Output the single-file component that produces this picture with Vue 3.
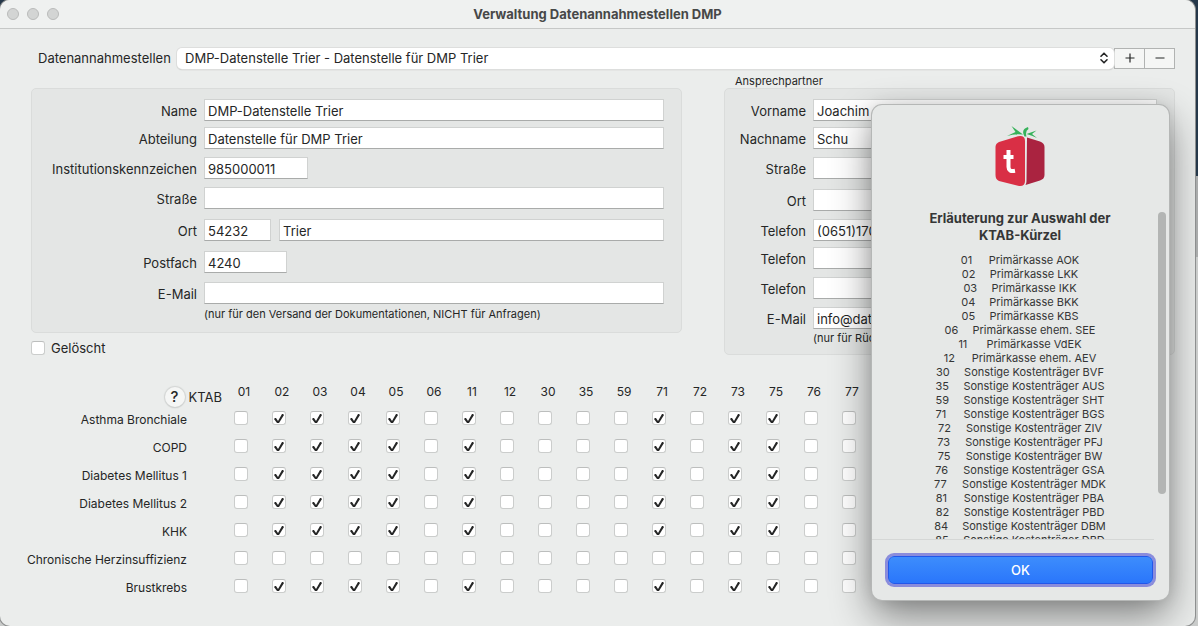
<script setup>
import { ref } from 'vue'

const codes = ['01', '02', '03', '04', '05', '06', '11', '12', '30', '35', '59', '71', '72', '73', '75', '76', '77']
const usual = ['02', '03', '04', '05', '11', '71', '73', '75']

const programs = ref([
  { name: 'Asthma Bronchiale', active: [...usual] },
  { name: 'COPD', active: [...usual] },
  { name: 'Diabetes Mellitus 1', active: [...usual] },
  { name: 'Diabetes Mellitus 2', active: [...usual] },
  { name: 'KHK', active: [...usual] },
  { name: 'Chronische Herzinsuffizienz', active: [] },
  { name: 'Brustkrebs', active: [...usual] }
])

const office = ref({
  name: 'DMP-Datenstelle Trier',
  department: 'Datenstelle für DMP Trier',
  number: '985000011',
  street: '',
  zip: '54232',
  city: 'Trier',
  box: '4240',
  mail: ''
})

const contact = ref([
  { id: 'c-first', label: 'Vorname', value: 'Joachim' },
  { id: 'c-last', label: 'Nachname', value: 'Schu' },
  { id: 'c-street', label: 'Straße', value: '' },
  { id: 'c-city', label: 'Ort', value: '' },
  { id: 'c-tel1', label: 'Telefon', value: '(0651)170' },
  { id: 'c-tel2', label: 'Telefon', value: '' },
  { id: 'c-tel3', label: 'Telefon', value: '' },
  { id: 'c-mail', label: 'E-Mail', value: 'info@datenstelle' }
])

const legend = [
  ['01', 'Primärkasse AOK'],
  ['02', 'Primärkasse LKK'],
  ['03', 'Primärkasse IKK'],
  ['04', 'Primärkasse BKK'],
  ['05', 'Primärkasse KBS'],
  ['06', 'Primärkasse ehem. SEE'],
  ['11', 'Primärkasse VdEK'],
  ['12', 'Primärkasse ehem. AEV'],
  ['30', 'Sonstige Kostenträger BVF'],
  ['35', 'Sonstige Kostenträger AUS'],
  ['59', 'Sonstige Kostenträger SHT'],
  ['71', 'Sonstige Kostenträger BGS'],
  ['72', 'Sonstige Kostenträger ZIV'],
  ['73', 'Sonstige Kostenträger PFJ'],
  ['75', 'Sonstige Kostenträger BW'],
  ['76', 'Sonstige Kostenträger GSA'],
  ['77', 'Sonstige Kostenträger MDK'],
  ['81', 'Sonstige Kostenträger PBA'],
  ['82', 'Sonstige Kostenträger PBD'],
  ['84', 'Sonstige Kostenträger DBM'],
  ['85', 'Sonstige Kostenträger DBD']
]

const deleted = ref(false)
</script>

<template>
  <div class="desktop">
    <main class="window">
      <header class="titlebar">
        <div class="lights">
          <button type="button" aria-label="Schließen"></button>
          <button type="button" aria-label="Minimieren"></button>
          <button type="button" aria-label="Zoomen"></button>
        </div>
        <h1>Verwaltung Datenannahmestellen DMP</h1>
      </header>

      <div class="content">
        <div class="toolbar">
          <label for="office">Datenannahmestellen</label>
          <div class="picker">
            <select id="office">
              <option>DMP-Datenstelle Trier - Datenstelle für DMP Trier</option>
            </select>
            <svg class="arrows" viewBox="0 0 8 12" aria-hidden="true">
              <path d="M1 4.2 4 1.2 7 4.2M1 7.8 4 10.8 7 7.8" />
            </svg>
          </div>
          <div class="segments">
            <button type="button" aria-label="Hinzufügen">
              <svg viewBox="0 0 10 10"><path d="M5 .5v9M.5 5h9" /></svg>
            </button>
            <button type="button" aria-label="Entfernen">
              <svg viewBox="0 0 10 10"><path d="M.5 5h9" /></svg>
            </button>
          </div>
        </div>

        <div class="columns">
          <div class="left">
            <section class="group office">
              <label for="o-name">Name</label>
              <input id="o-name" v-model="office.name" type="text" />
              <label for="o-dep">Abteilung</label>
              <input id="o-dep" v-model="office.department" type="text" />
              <label for="o-num">Institutionskennzeichen</label>
              <input id="o-num" v-model="office.number" class="number" type="text" />
              <label for="o-street">Straße</label>
              <input id="o-street" v-model="office.street" type="text" />
              <label for="o-zip">Ort</label>
              <div class="pair">
                <input id="o-zip" v-model="office.zip" class="zip" type="text" />
                <input v-model="office.city" class="city" type="text" aria-label="Ortsname" />
              </div>
              <label for="o-box">Postfach</label>
              <input id="o-box" v-model="office.box" class="box" type="text" />
              <label for="o-mail">E-Mail</label>
              <input id="o-mail" v-model="office.mail" type="text" />
              <p class="hint">(nur für den Versand der Dokumentationen, NICHT für Anfragen)</p>
            </section>
            <label class="deleted"><input v-model="deleted" class="tick" type="checkbox" />Gelöscht</label>
          </div>

          <div class="right">
            <h2>Ansprechpartner</h2>
            <section class="group contact">
              <template v-for="f in contact" :key="f.id">
                <label :for="f.id">{{ f.label }}</label>
                <input :id="f.id" v-model="f.value" type="text" />
              </template>
              <p class="hint">(nur für Rückfragen)</p>
            </section>
          </div>
        </div>

        <table>
          <thead>
            <tr>
              <th class="corner" scope="col">
                <div class="ktab"><button type="button" class="help" aria-label="Hilfe">?</button>KTAB</div>
              </th>
              <th v-for="c in codes" :key="c" scope="col">{{ c }}</th>
            </tr>
          </thead>
          <tbody>
            <tr v-for="p in programs" :key="p.name">
              <th scope="row">{{ p.name }}</th>
              <td v-for="c in codes" :key="c">
                <input v-model="p.active" class="tick" type="checkbox" :value="c" :aria-label="p.name + ' ' + c" />
              </td>
            </tr>
          </tbody>
        </table>
      </div>

      <div class="dialog" role="dialog" aria-labelledby="dialog-title">
        <svg class="logo" viewBox="0 0 50 60" aria-hidden="true">
          <path fill="#d92f45" d="M4 16 23 10.2Q30 9 30 15V55Q30 61 23 59.8L4 55Q.5 53.500 .5 49V21Q.5 17.500 4 16Z" />
          <path fill="#aa2340" d="M32 11.500 45 15.500Q49.500 17 49.500 21V49Q49.500 53 45 54.500L30.500 59Q31.500 57.500 31.500 55Z" />
          <path fill="#36b25a" d="M16.500 0 28 8.500Q20 7.500 12 10L20.500 6ZM29.500 10.500Q25.500 3.500 33 1L33.500 3Q30 5 31.500 10.500ZM31.500 8 41.500 4.500 37 8 42 12Q37 9.500 31.500 8Z" />
          <path fill="none" stroke="#fff" stroke-width="4" d="M13.500 24V41Q13.500 46 20 44.800M8.500 31H18.500" />
        </svg>
        <div class="scroller">
          <h2 id="dialog-title">Erläuterung zur Auswahl der KTAB-Kürzel</h2>
          <ul>
            <li v-for="[code, text] in legend" :key="code"><span>{{ code }}</span>{{ text }}</li>
          </ul>
        </div>
        <div class="thumb"></div>
        <button type="button" class="ok">OK</button>
      </div>
    </main>
  </div>
</template>

<style>
body {
  margin: 0;
}
</style>

<style scoped>
* {
  box-sizing: border-box;
}
.desktop {
  height: 100vh;
  padding-right: 3px;
  overflow: hidden;
  background: linear-gradient(#25384a 0 176px, #a9abab 176px 257px, #c9cbca 257px);
  font-family: Inter, "Liberation Sans", sans-serif;
  font-size: 13px;
  line-height: 16px;
  color: #252626;
}
.window {
  position: relative;
  height: 100%;
  overflow: hidden;
  border-radius: 10px;
  background: #ebedec;
  box-shadow: 0 0 0 1px #8d8f8f;
}
button,
input,
select {
  font: inherit;
  color: inherit;
  margin: 0;
}
h1,
h2,
p,
ul {
  margin: 0;
  padding: 0;
}
.titlebar {
  display: grid;
  grid-template-columns: 1fr auto 1fr;
  align-items: center;
  height: 29px;
  padding: 0 7px;
  background: #eff1f0;
  border-bottom: 1px solid #c6c8c7;
}
.lights {
  display: flex;
  gap: 8px;
}
.lights button {
  width: 12px;
  height: 12px;
  padding: 0;
  border: 1px solid #b9bbba;
  border-radius: 50%;
  background: #d3d5d4;
}
h1 {
  font-size: 13px;
  font-weight: 700;
  color: #474848;
}
.content {
  padding: 18px 20px 0 0;
}
.toolbar {
  display: flex;
  align-items: center;
  height: 22px;
  padding-left: 38px;
}
.toolbar > label {
  width: 131px;
  margin-right: 8px;
  white-space: nowrap;
}
.picker {
  position: relative;
  flex: 1;
}
.picker select {
  display: block;
  width: 100%;
  height: 21px;
  padding: 0 24px 1px 8px;
  border: 0;
  border-radius: 5px;
  background: #fff;
  appearance: none;
  box-shadow: 0 0 0 1px #dddedd, 0 1px 1px #a5a7a6;
}
.arrows {
  position: absolute;
  right: 6px;
  top: 4px;
  width: 8px;
  height: 12px;
  fill: none;
  stroke: #252626;
  stroke-width: 1.600;
  stroke-linecap: round;
  stroke-linejoin: round;
}
.segments {
  display: flex;
  border: 1px solid #b1b3b2;
}
.segments button {
  display: grid;
  place-items: center;
  width: 29px;
  height: 19px;
  padding: 0;
  border: 0;
  background: #f5f6f5;
}
.segments button + button {
  width: 30px;
  border-left: 1px solid #b1b3b2;
}
.segments svg {
  width: 10px;
  height: 10px;
  stroke: #252626;
  stroke-width: 1.200;
}
.columns {
  display: flex;
  gap: 42px;
  padding: 5px 0 0 31px;
}
.left {
  flex: 651;
  padding-top: 14px;
}
.right {
  flex: 451;
}
.right h2 {
  padding-left: 11px;
  font-size: 11px;
  font-weight: 400;
  line-height: 14px;
}
.group {
  display: grid;
  column-gap: 7px;
  align-items: start;
  padding-top: 10px;
  border: 1px solid #dadcdb;
  border-radius: 5px;
  background: #e4e6e5;
}
.office {
  grid-template-columns: 165px 1fr;
  grid-template-rows: 28px 30px 30px 32px 32px 31px 25px 25px;
  padding-right: 17px;
}
.contact {
  grid-template-columns: 81px 1fr;
  grid-template-rows: 28px 30px 32px 30px 28px 30px 30px 24px 23px;
  padding-right: 17px;
}
.group label {
  padding-top: 4px;
  text-align: right;
  white-space: nowrap;
}
.group input {
  width: 100%;
  min-width: 0;
  height: 22px;
  padding: 2px 3px 0;
  border: 1px solid #d0d2d1;
  border-bottom-color: #a9abaa;
  border-radius: 0;
  background: #fff;
}
.group .number {
  width: 104px;
}
.group .box {
  width: 83px;
}
.pair {
  display: flex;
  gap: 8px;
}
.pair .zip {
  width: 67px;
}
.pair .city {
  flex: 1;
}
.hint {
  grid-column: 2;
  font-size: 11px;
  line-height: 14px;
  white-space: nowrap;
}
.deleted {
  display: flex;
  align-items: center;
  gap: 6px;
  padding-top: 7px;
}
.tick {
  display: block;
  width: 14px;
  height: 14px;
  border: 1px solid #cbcdcc;
  border-top-color: #bcbebd;
  border-radius: 3px;
  background: #fff;
  appearance: none;
}
.tick:checked::before {
  content: "";
  display: block;
  width: 12px;
  height: 12px;
  background: #252626;
  clip-path: polygon(1px 7px, 2px 6px, 3px 6px, 5px 9px, 9px 2px, 10px 2px, 11px 3px, 6px 11px, 4px 11px);
}
table {
  table-layout: fixed;
  width: 868px;
  border-collapse: collapse;
  font-size: 12px;
}
th,
td {
  padding: 0;
  font-weight: 400;
}
thead th {
  width: 38px;
  height: 51px;
  padding: 0 0 7px 6px;
  vertical-align: bottom;
}
thead .corner {
  width: 222px;
  padding: 0;
}
.ktab {
  display: flex;
  justify-content: flex-end;
  align-items: center;
  gap: 4px;
  font-size: 13px;
}
.help {
  width: 20px;
  height: 20px;
  padding: 0;
  border: 0;
  border-radius: 50%;
  background: #f5f6f5;
  box-shadow: 0 0 1px 1px #d3d5d4, 0 1px 1px #b5b7b6;
  font-size: 15px;
  font-weight: 500;
  line-height: 20px;
}
tbody th {
  height: 28px;
  padding: 5px 35px 0 0;
  text-align: right;
  vertical-align: top;
  white-space: nowrap;
}
tbody td {
  padding: 4px 12px 0;
  vertical-align: top;
}
.dialog {
  position: absolute;
  top: 105px;
  right: 26px;
  width: 297px;
  padding: 21px 0 16px;
  border-radius: 10px;
  background: #e6e8e7;
  box-shadow: 0 0 0 1px #b5b7b6, 0 16px 40px rgba(0, 0, 0, 0.46), 0 0 16px rgba(0, 0, 0, 0.1);
}
.logo {
  display: block;
  width: 50px;
  height: 60px;
  margin: 0 0 24px 123px;
}
.scroller {
  height: 330px;
  margin-right: 15px;
  padding-left: 14px;
  overflow: hidden;
  border-bottom: 1px solid #d5d7d6;
  text-align: center;
}
.scroller h2 {
  padding: 0 32px 9px;
  font-size: 13px;
  font-weight: 700;
  line-height: 17px;
  color: #353636;
}
.scroller ul {
  list-style: none;
  font-size: 11px;
  line-height: 14px;
  color: #353636;
}
.scroller span {
  display: inline-block;
  width: 28px;
  text-align: left;
}
.thumb {
  position: absolute;
  top: 107px;
  right: 3px;
  width: 8px;
  height: 282px;
  border-radius: 4px;
  background: #b3b5b4;
}
.ok {
  display: block;
  width: calc(100% - 32px);
  height: 28px;
  margin: 16px auto 0;
  padding: 0;
  border: 1px solid #2257ea;
  border-radius: 6px;
  background: linear-gradient(#3d8dfc, #2a76fb);
  box-shadow: 0 0 0 3px #8a8cdc;
  color: #fff;
  font-weight: 500;
}
</style>
